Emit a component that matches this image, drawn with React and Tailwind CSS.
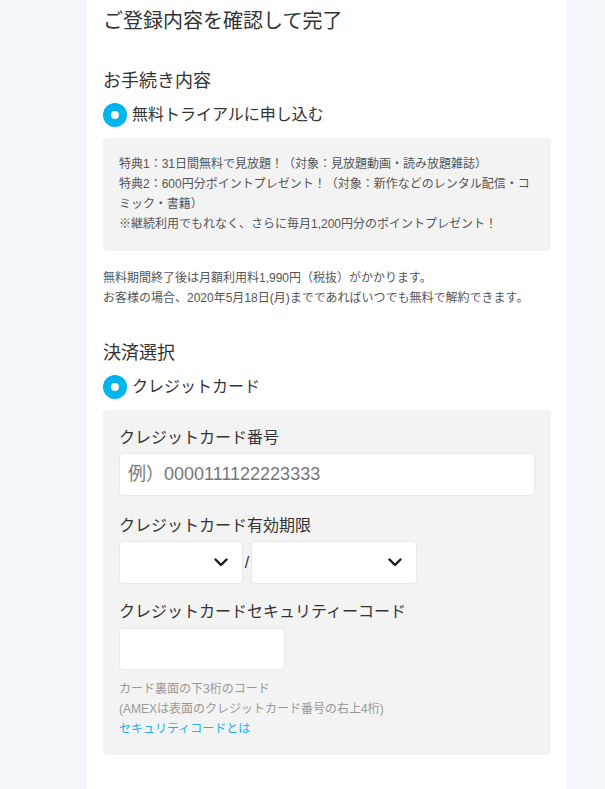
import React from "react";

const font = { fontFamily: '"Liberation Sans", "Noto Sans CJK JP", sans-serif' };

function Radio({ label }) {
  return (
    <div className="flex items-center h-6">
      <span className="flex items-center justify-center w-6 h-6 rounded-full bg-[#00b4ef]">
        <span className="w-[8px] h-[8px] rounded-full bg-white" />
      </span>
      <span className="ml-[5px] text-[16px] leading-6 text-[#333]">{label}</span>
    </div>
  );
}

function Chevron() {
  return (
    <svg width="14" height="9" viewBox="0 0 14 9" className="shrink-0">
      <polyline points="1.5,1.5 7,7 12.5,1.5" fill="none" stroke="#1a1a1a" strokeWidth="2.4" strokeLinecap="round" strokeLinejoin="round" />
    </svg>
  );
}

function Select({ w }) {
  return (
    <div className={`${w} h-[43px] bg-white border border-[#e8e8e8] rounded-[4px] flex items-center justify-end pr-[14px]`}>
      <Chevron />
    </div>
  );
}

export default function App() {
  return (
    <div className="min-h-screen bg-[#f3f6fa]" style={font}>
      <div className="ml-[87px] w-[480px] min-h-screen bg-white px-4 pt-[6px] pb-10 text-[#333]">
        <h1 className="text-[20px] leading-[30px] font-normal">ご登録内容を確認して完了</h1>

        <h2 className="mt-[32px] text-[18px] leading-[27px] font-normal">お手続き内容</h2>
        <div className="mt-[8px]">
          <Radio label="無料トライアルに申し込む" />
        </div>
        <div className="mt-[11px] bg-[#f3f3f3] rounded-[4px] px-4 pt-4 pb-[17px] text-[12px] leading-[20px] text-[#555]">
          <p>特典1：31日間無料で見放題！（対象：見放題動画・読み放題雑誌）</p>
          <p>特典2：600円分ポイントプレゼント！（対象：新作などのレンタル配信・コミック・書籍）</p>
          <p>※継続利用でもれなく、さらに毎月1,200円分のポイントプレゼント！</p>
        </div>
        <div className="mt-[17px] text-[12px] leading-[20px] text-[#555]">
          <p>無料期間終了後は月額利用料1,990円（税抜）がかかります。</p>
          <p>お客様の場合、2020年5月18日(月)までであればいつでも無料で解約できます。</p>
        </div>

        <h2 className="mt-[32px] text-[18px] leading-[27px] font-normal">決済選択</h2>
        <div className="mt-[8px]">
          <Radio label="クレジットカード" />
        </div>
        <div className="mt-[11px] bg-[#f3f3f3] rounded-[4px] px-4 pt-4 pb-[16px]">
          <div className="text-[16px] leading-6 text-[#333]">クレジットカード番号</div>
          <div className="mt-[3px] h-[43px] bg-white border border-[#e8e8e8] rounded-[4px] flex items-center px-2 text-[18px] text-[#777]">
            例）0000111122223333
          </div>

          <div className="mt-[18px] text-[16px] leading-6 text-[#333]">クレジットカード有効期限</div>
          <div className="mt-[3px] flex items-center">
            <Select w="w-[124px]" />
            <span className="w-[8px] text-center text-[16px] text-[#333]">/</span>
            <Select w="w-[166px]" />
          </div>

          <div className="mt-[16px] text-[16px] leading-6 text-[#333]">クレジットカードセキュリティーコード</div>
          <div className="mt-[4px] w-[166px] h-[42px] bg-white border border-[#e8e8e8] rounded-[4px]" />

          <div className="mt-[9px] text-[12px] leading-[20px] text-[#999]">
            <p>カード裏面の下3桁のコード</p>
            <p>(AMEXは表面のクレジットカード番号の右上4桁)</p>
            <p className="text-[#1ab2ee]">セキュリティコードとは</p>
          </div>
        </div>
      </div>
    </div>
  );
}
